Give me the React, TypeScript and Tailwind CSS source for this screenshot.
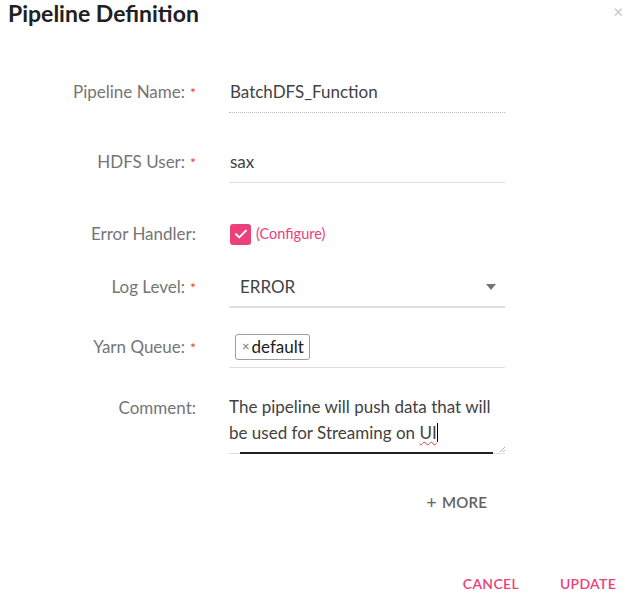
const font = { fontFamily: 'Lato, "Open Sans", sans-serif' };

function Label({ text, required }: { text: string; required?: boolean }) {
  return (
    <div className="w-[196px] h-[40px] flex items-center justify-end text-[17px] text-[#757575] shrink-0">
      {text}
      {required && <span className="ml-[5px] text-[#e53935] text-[14px]">*</span>}
    </div>
  );
}

export default function App() {
  return (
    <div className="w-[642px] h-[595px] bg-white overflow-hidden flex flex-col" style={font}>
      {/* Header */}
      <div className="flex items-start justify-between pl-[8px] pr-[19px]">
        <h1 className="text-[23px] leading-[26px] font-bold text-[#212121]">Pipeline Definition</h1>
        <button className="mt-[3px] text-[#c4c4c4] text-[17px] leading-none">×</button>
      </div>

      {/* Form */}
      <div className="flex flex-col mt-[46px]">
        {/* Pipeline Name */}
        <div className="flex">
          <Label text="Pipeline Name:" required />
          <div className="ml-[33px] w-[276px] h-[41px] flex items-center border-b border-dotted border-[#bdbdbd] text-[17px] text-[#424242] pl-[1px]">
            BatchDFS_Function
          </div>
        </div>

        {/* HDFS User */}
        <div className="flex mt-[29px]">
          <Label text="HDFS User:" required />
          <div className="ml-[33px] w-[276px] h-[41px] flex items-center border-b border-[#e0e0e0] text-[17px] text-[#424242] pl-[1px]">
            sax
          </div>
        </div>

        {/* Error Handler */}
        <div className="flex mt-[31px]">
          <Label text="Error Handler:" />
          <div className="ml-[33px] w-[276px] h-[40px] flex items-center pl-[1px]">
            <div className="w-[21px] h-[21px] rounded-[3px] bg-[#ec407a] flex items-center justify-center">
              <svg width="14" height="14" viewBox="0 0 14 14" fill="none">
                <path d="M2 7.2l3.2 3.2L12 3.6" stroke="white" strokeWidth="2" strokeLinecap="round" strokeLinejoin="round" />
              </svg>
            </div>
            <span className="ml-[5px] text-[14.5px] text-[#ec407a]">(Configure)</span>
          </div>
        </div>

        {/* Log Level */}
        <div className="flex mt-[13px]">
          <Label text="Log Level:" required />
          <div className="ml-[33px] w-[276px] h-[41px] flex items-center justify-between border-b-2 border-[#e0e0e0] pl-[11px] pr-[9px]">
            <span className="text-[17px] text-[#424242]">ERROR</span>
            <svg width="10" height="6" viewBox="0 0 10 6">
              <path d="M0 0h10L5 6z" fill="#757575" />
            </svg>
          </div>
        </div>

        {/* Yarn Queue */}
        <div className="flex mt-[19px]">
          <Label text="Yarn Queue:" required />
          <div className="ml-[33px] w-[276px] h-[41px] flex items-center border-b border-[#e0e0e0] pl-[6px]">
            <span className="h-[26px] flex items-center border border-[#9e9e9e] rounded-[3px] pl-[6px] pr-[5px] text-[17px] text-[#212121]">
              <span className="text-[13px] text-[#757575] mr-[2px]">×</span>default
            </span>
          </div>
        </div>

        {/* Comment */}
        <div className="flex mt-[21px]">
          <div className="w-[196px] h-[38px] flex items-center justify-end text-[17px] text-[#757575] shrink-0">Comment:</div>
          <div className="relative ml-[33px] w-[276px] h-[65px] border-b border-[#e0e0e0] pt-[5px] text-[17px] leading-[26px] text-[#424242]">
            <p>The pipeline will push data that will</p>
            <p>
              be used for Streaming on{' '}
              <span className="underline decoration-wavy decoration-[#e53935] decoration-1 underline-offset-2">UI</span>
              <span className="inline-block w-px h-[19px] bg-black align-[-3px]" />
            </p>
            <div className="absolute left-[11px] right-[12px] bottom-[-1px] h-[2px] bg-[#212121]" />
            <svg className="absolute right-0 bottom-[1px]" width="6" height="6" viewBox="0 0 6 6">
              <path d="M1 6L6 1M4 6L6 4" stroke="#9e9e9e" strokeWidth="0.8" />
            </svg>
          </div>
        </div>

        {/* More */}
        <div className="flex justify-end w-[505px] pr-[18px] mt-[37px]">
          <button className="flex items-center gap-[5px] text-[15px] font-semibold text-[#616161] tracking-[0.2px]">
            <span className="text-[18px] font-normal leading-none">+</span>MORE
          </button>
        </div>
      </div>

      {/* Footer */}
      <div className="mt-auto flex justify-end gap-[41px] pr-[26px] pb-[1px] h-[22px] items-center">
        <button className="text-[14px] font-semibold text-[#ec407a] tracking-[0.3px]">CANCEL</button>
        <button className="text-[14px] font-semibold text-[#ec407a] tracking-[0.3px]">UPDATE</button>
      </div>
    </div>
  );
}
